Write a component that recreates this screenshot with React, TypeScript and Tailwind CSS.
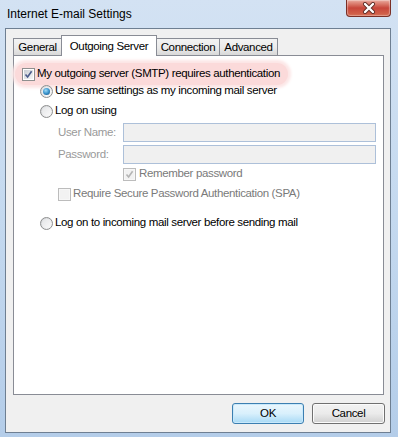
import React from 'react';

const font = { fontFamily: '"Liberation Sans", Arial, sans-serif' };

function CheckBox({ checked, disabled }: { checked?: boolean; disabled?: boolean }) {
	return (
		<div
			className={`w-[13px] h-[13px] shrink-0 border p-[1px] ${
				disabled ? 'border-[#bcbcbc] bg-[#f7f7f7]' : 'border-[#8e8f8f] bg-white'
			}`}
		>
			<div
				className={`w-full h-full relative ${
					disabled ? 'bg-[#f2f2f2]' : 'bg-gradient-to-br from-[#c9cdd3] to-[#f7f7f7]'
				}`}
			>
				{checked && (
					<svg viewBox="0 0 9 9" className="absolute inset-0 w-[9px] h-[9px]">
						<path
							d="M1.5 4.5 L3.6 7 L7.6 1.2"
							fill="none"
							stroke={disabled ? '#b4b4b4' : '#4a5a8a'}
							strokeWidth="1.6"
						/>
					</svg>
				)}
			</div>
		</div>
	);
}

function Radio({ checked }: { checked?: boolean }) {
	return (
		<div className="w-[13px] h-[13px] shrink-0 rounded-full border border-[#8e8f8f] bg-gradient-to-br from-[#d2d4d8] to-[#fbfbfb] flex items-center justify-center">
			<div className="w-[9px] h-[9px] rounded-full bg-gradient-to-br from-[#e4e5e7] to-[#fafafa] flex items-center justify-center">
				{checked && (
					<div className="w-[7px] h-[7px] rounded-full bg-[radial-gradient(circle_at_40%_35%,#9fdcf8_0%,#3a93cc_50%,#134d7a_100%)]" />
				)}
			</div>
		</div>
	);
}

function Tab({ label, active, w }: { label: string; active?: boolean; w: string }) {
	if (active) {
		return (
			<div
				className={`${w} h-[21px] -ml-[1px] relative z-10 bg-white border border-b-0 border-[#898c95] flex items-start justify-center pt-[2px] whitespace-nowrap`}
			>
				{label}
			</div>
		);
	}
	return (
		<div
			className={`${w} h-[18px] -ml-[1px] first:ml-0 border border-b-0 border-[#898c95] bg-gradient-to-b from-[#f3f3f3] via-[#ebebeb] to-[#d6d6d6] flex items-center justify-center whitespace-nowrap`}
		>
			{label}
		</div>
	);
}

export default function App() {
	return (
		<div
			className="w-[398px] h-[437px] overflow-hidden bg-gradient-to-b from-[#d3e2f3] via-[#c4d9ef] to-[#b4cde9]"
			style={font}
		>
			{/* title bar */}
			<div className="h-[28px] flex items-start justify-between pl-[7px] pr-[7px]">
				<div className="pt-[5px] text-[12px] text-black">Internet E-mail Settings</div>
				<div className="w-[45px] h-[17px] rounded-b-[4px] border border-t-0 border-[#7a2f26] bg-gradient-to-b from-[#e9a99d] via-[#c7453a] to-[#d4694e] flex items-center justify-center shadow-[inset_0_0_1px_1px_rgba(255,255,255,0.35)]">
					<svg viewBox="0 0 14 12" className="w-[14px] h-[12px]">
						<path d="M3 2 L11 10 M11 2 L3 10" stroke="#5b2a24" strokeWidth="4" strokeLinecap="round" />
						<path d="M3 2 L11 10 M11 2 L3 10" stroke="#ffffff" strokeWidth="2.4" strokeLinecap="round" />
					</svg>
				</div>
			</div>

			{/* client area */}
			<div className="ml-[5px] w-[386px] h-[405px] border border-[#6e7f92] bg-[#f0f0f0] flex flex-col text-[11.5px] tracking-[-0.35px] text-black">
				<div className="ml-[7px] mt-[6px] h-[21px] flex items-end">
					<Tab label="General" w="w-[49px]" />
					<Tab label="Outgoing Server" active w="w-[96px]" />
					<Tab label="Connection" w="w-[64px]" />
					<Tab label="Advanced" w="w-[59px]" />
				</div>
				<div className="ml-[7px] -mt-[1px] w-[371px] h-[340px] relative bg-white border border-[#898c95] flex flex-col whitespace-nowrap">
					<div className="ml-[1px] mt-[7px] w-[273px] h-[22px] rounded-full bg-[#fbdada] shadow-[0_0_3px_3px_#fce6e6] flex items-center pl-[7px] gap-[2px]">
						<CheckBox checked />
						<span>My outgoing server (SMTP) requires authentication</span>
					</div>
					<div className="-mt-[4px] h-[20px] flex items-center pl-[26px] gap-[2px]">
						<Radio checked />
						<span>Use same settings as my incoming mail server</span>
					</div>
					<div className="h-[20px] flex items-center pl-[26px] gap-[2px]">
						<Radio />
						<span>Log on using</span>
					</div>
					<div className="mt-[2px] h-[19px] flex items-center pl-[44px]">
						<span className="w-[65px] text-[#9a9a9a]">User Name:</span>
						<div className="w-[253px] h-[19px] border border-[#adc0d9] bg-[#f0f0f0]" />
					</div>
					<div className="mt-[3px] h-[19px] flex items-center pl-[44px]">
						<span className="w-[65px] text-[#9a9a9a]">Password:</span>
						<div className="w-[253px] h-[19px] border border-[#adc0d9] bg-[#f0f0f0]" />
					</div>
					<div className="mt-[2px] h-[16px] flex items-center pl-[109px] gap-[3px] text-[#7a7a7a]">
						<CheckBox checked disabled />
						<span>Remember password</span>
					</div>
					<div className="mt-[4px] h-[16px] flex items-center pl-[44px] gap-[2px] text-[#7a7a7a]">
						<CheckBox disabled />
						<span>Require Secure Password Authentication (SPA)</span>
					</div>
					<div className="mt-[11px] h-[20px] flex items-center pl-[26px] gap-[2px]">
						<Radio />
						<span>Log on to incoming mail server before sending mail</span>
					</div>
				</div>
				<div className="mt-[8px] flex justify-end gap-[8px] pr-[5px]">
					<button className="w-[72px] h-[21px] rounded-[3px] border border-[#3c7fb1] bg-gradient-to-b from-[#eaf6fd] via-[#d9f0fc] to-[#a7d9f5] shadow-[inset_0_0_0_1px_#c9e9fb]">
						OK
					</button>
					<button className="w-[73px] h-[21px] rounded-[3px] border border-[#707070] bg-gradient-to-b from-[#f2f2f2] via-[#ebebeb] to-[#d0d0d0] shadow-[inset_0_0_0_1px_#fbfbfb]">
						Cancel
					</button>
				</div>
			</div>
		</div>
	);
}
